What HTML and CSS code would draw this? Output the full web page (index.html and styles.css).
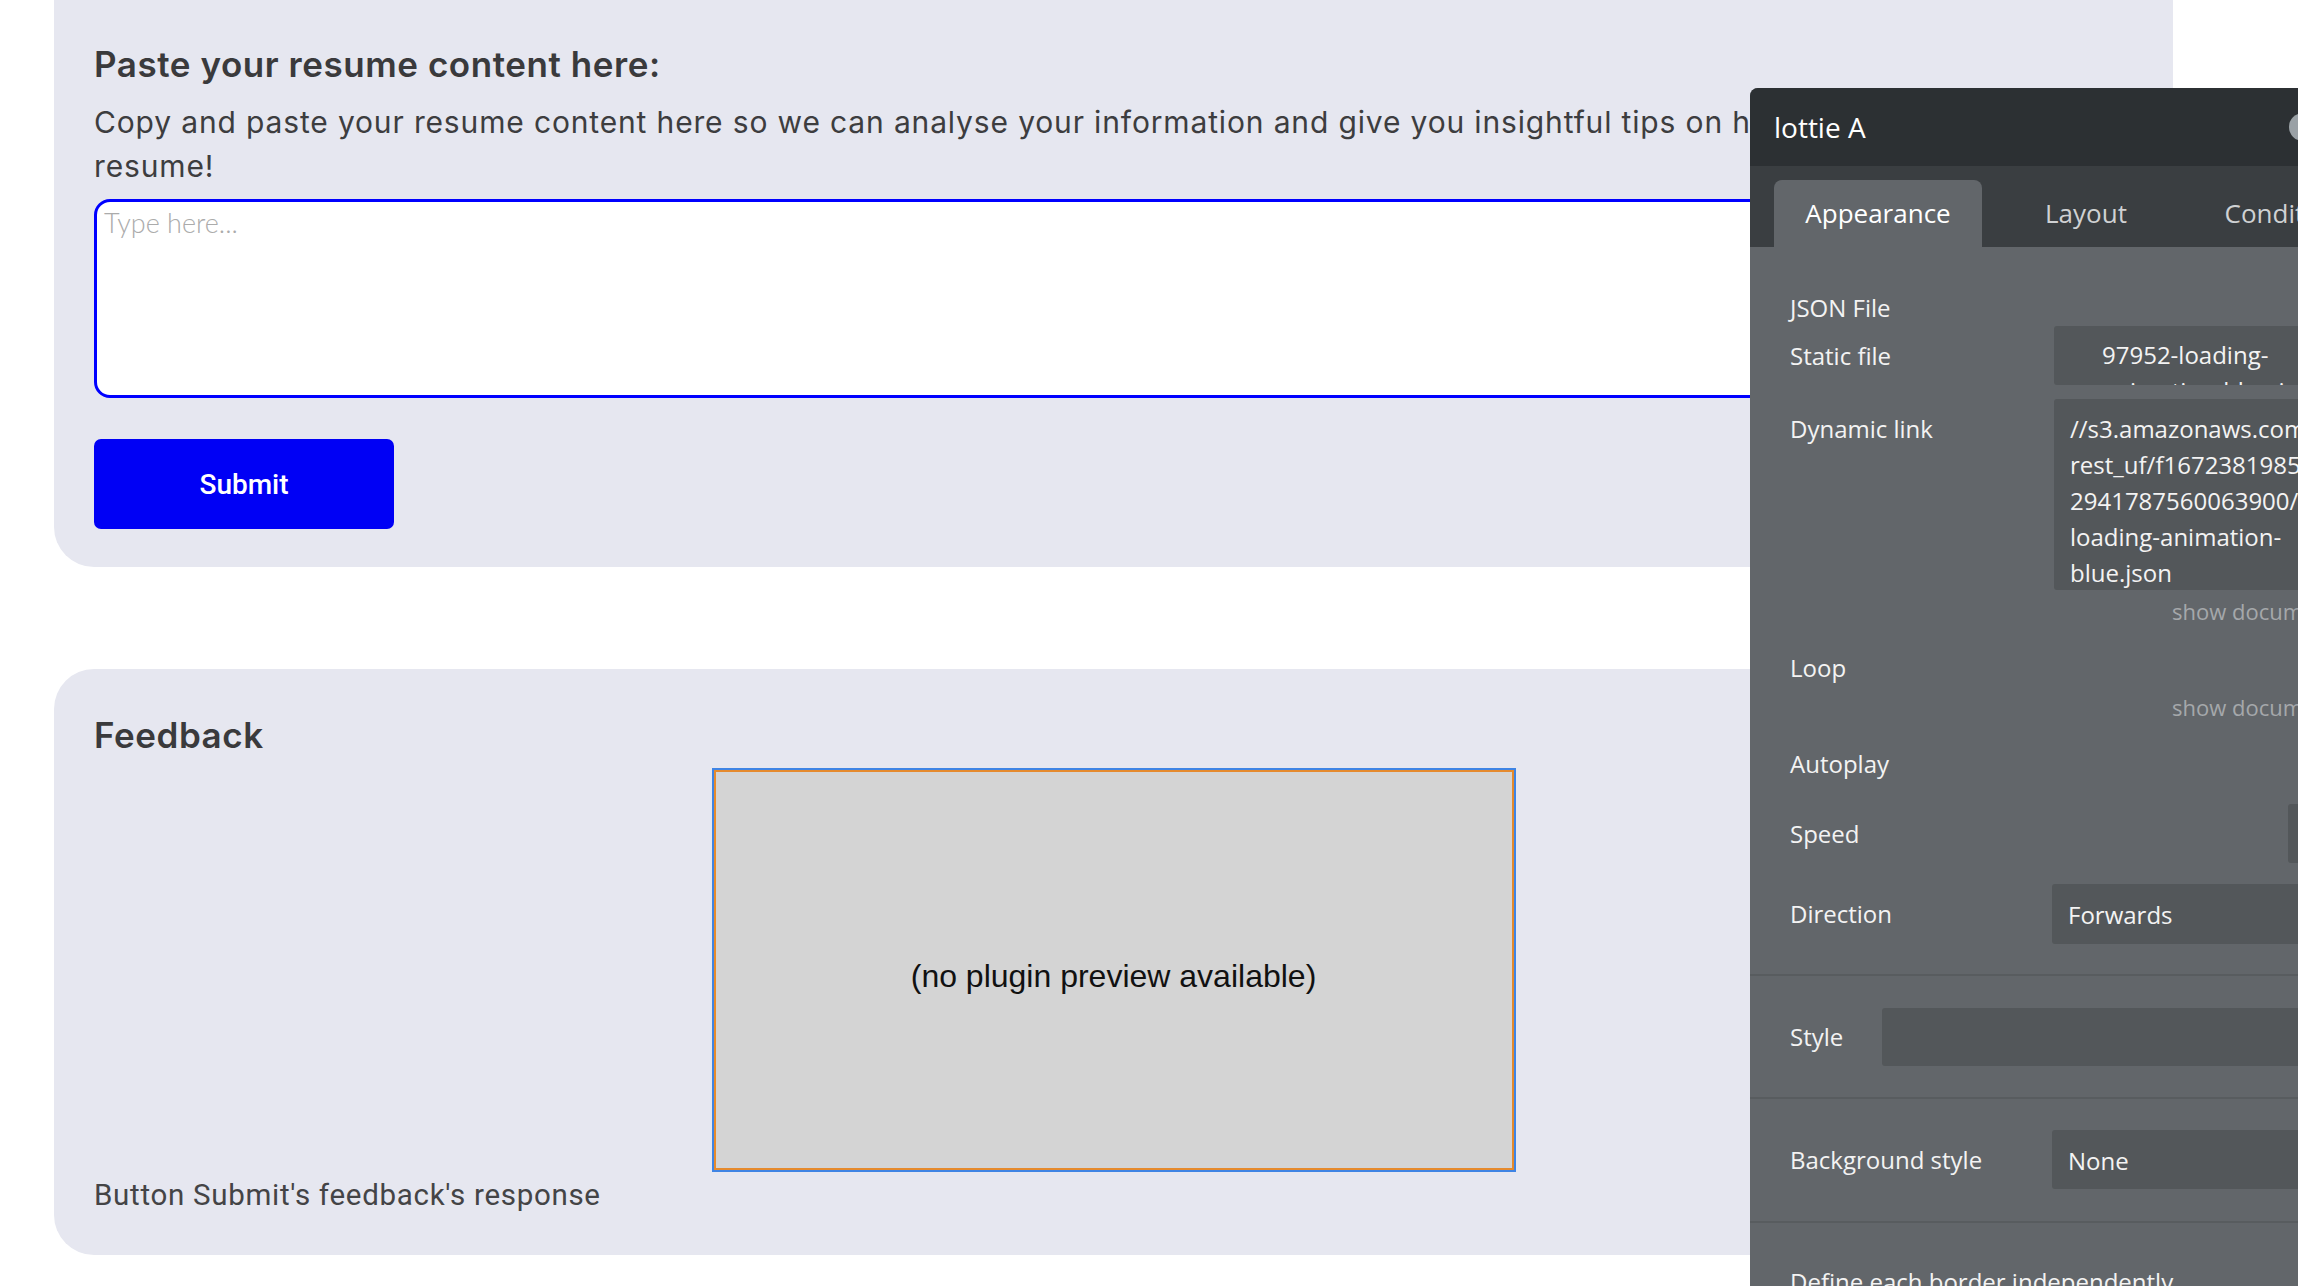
FILE: index.html
```html
<!DOCTYPE html>
<html lang="en">
<head>
  <meta charset="UTF-8">
  <meta name="viewport" content="width=device-width, initial-scale=1.0">
  <title>Resume Analyser - Editor Preview</title>
  <link rel="stylesheet" href="styles.css">
</head>
<body>
  <div class="page">
    <!-- Resume input -->
    <section class="card card-input">
      <h2>Paste your resume content here:</h2>
      <p class="intro">Copy and paste your resume content here so we can analyse your information and give you insightful tips on how to improve your resume!</p>
      <textarea class="resume-box" placeholder="Type here..."></textarea>
      <button class="submit-btn">Submit</button>
    </section>

    <!-- Feedback -->
    <section class="card card-feedback">
      <h2>Feedback</h2>
      <div class="plugin-preview">(no plugin preview available)</div>
      <p class="response">Button Submit's feedback's response</p>
    </section>
  </div>

  <!-- Property editor floating over the page -->
  <aside class="editor">
    <div class="editor-header">
      <span class="editor-title">lottie A</span>
      <span class="editor-close"></span>
    </div>

    <div class="editor-tabs">
      <div class="tab active">Appearance</div>
      <div class="tab">Layout</div>
      <div class="tab">Conditional</div>
    </div>

    <div class="editor-section first">
      <div class="prop-label heading">JSON File</div>
      <div class="prop-row">
        <div class="prop-label">Static file</div>
        <div class="prop-input static-file">97952-loading-<br>animation-blue.json</div>
      </div>
      <div class="prop-row top dynamic">
        <div class="prop-label">Dynamic link</div>
        <div class="prop-input dynamic-link">
          <div>//s3.amazonaws.com/appfo</div>
          <div>rest_uf/f1672381985339x</div>
          <div>2941787560063900/97952-</div>
          <div>loading-animation-</div>
          <div>blue.json</div>
        </div>
      </div>
      <div class="show-doc first-doc">show documentation</div>
      <div class="prop-label loop">Loop</div>
      <div class="show-doc second-doc">show documentation</div>
      <div class="prop-label autoplay">Autoplay</div>
      <div class="prop-row speed">
        <div class="prop-label">Speed</div>
        <div class="prop-input speed-input"></div>
      </div>
      <div class="prop-row direction">
        <div class="prop-label">Direction</div>
        <div class="prop-input select">Forwards</div>
      </div>
    </div>

    <div class="editor-section style-section">
      <div class="prop-row">
        <div class="prop-label short">Style</div>
        <div class="prop-input style-input"></div>
      </div>
    </div>

    <div class="editor-section bg-section">
      <div class="prop-row">
        <div class="prop-label">Background style</div>
        <div class="prop-input select">None</div>
      </div>
    </div>

    <div class="editor-section border-section">
      <div class="prop-label">Define each border independently</div>
    </div>
  </aside>
</body>
</html>
```

FILE: styles.css
```css
html, body {
  margin: 0;
  padding: 0;
  height: 100%;
}

body {
  background-color: #fff;
  font-family: Inter, Roboto, sans-serif;
  color: #3b3b3b;
  overflow: hidden;
  position: relative;
}

.page {
  padding-left: 54px;
}

.card {
  width: 2119px;
  box-sizing: border-box;
  background-color: #e6e7f0;
  padding: 0 40px;
}

.card h2 {
  margin: 0;
  font-family: Inter, Roboto, sans-serif;
  font-size: 35px;
  font-weight: 600;
  line-height: 42px;
  letter-spacing: 0.55px;
  color: #3a3a3c;
}

/* Resume input card */
.card-input {
  border-radius: 0 0 40px 40px;
  padding-top: 43px;
  padding-bottom: 38px;
}

.intro {
  margin: 15px 0 0;
  font-size: 30px;
  line-height: 44px;
  letter-spacing: 0.85px;
  color: #3d3d3f;
}

.resume-box {
  display: block;
  width: 100%;
  height: 199px;
  box-sizing: border-box;
  margin-top: 11px;
  padding: 4px 7px;
  border: 3px solid #0000ff;
  border-radius: 16px;
  background-color: #fff;
  font-family: Lato, sans-serif;
  font-size: 27px;
  resize: none;
  outline: none;
}

.resume-box::placeholder {
  color: #ababab;
  font-weight: 300;
}

.submit-btn {
  display: block;
  width: 300px;
  height: 90px;
  margin-top: 41px;
  border: none;
  border-radius: 7px;
  background-color: #0000f5;
  color: #fff;
  font-family: Roboto, sans-serif;
  font-size: 28px;
  font-weight: 500;
  cursor: pointer;
}

/* Feedback card */
.card-feedback {
  margin-top: 102px;
  border-radius: 40px;
  padding-top: 45px;
  padding-bottom: 42px;
}

.plugin-preview {
  width: 804px;
  height: 404px;
  box-sizing: border-box;
  margin: 12px auto 0;
  border: 2px solid #3f84e4;
  box-shadow: inset 0 0 0 2px #e58a2d;
  background-color: #d4d4d4;
  display: flex;
  align-items: center;
  justify-content: center;
  padding-top: 12px;
  font-family: "Liberation Sans", Arial, sans-serif;
  font-size: 32px;
  color: #111;
}

.response {
  margin: 5px 0 0;
  font-family: Roboto, sans-serif;
  font-size: 29.5px;
  line-height: 36px;
  letter-spacing: 0.7px;
  color: #444446;
}

/* Editor panel */
.editor {
  position: absolute;
  left: 1750px;
  top: 88px;
  width: 620px;
  height: 1260px;
  background-color: #62666a;
  border-top-left-radius: 8px;
  overflow: hidden;
  font-family: "Open Sans", sans-serif;
  color: #f3f3f3;
}

.editor-header {
  height: 78px;
  background-color: #2c3033;
  display: flex;
  align-items: center;
  padding: 0 53px 0 24px;
}

.editor-title {
  font-size: 28px;
  color: #fff;
}

.editor-close {
  margin-left: auto;
  width: 28px;
  height: 28px;
  border-radius: 50%;
  background-color: #9aa1a6;
}

.editor-tabs {
  height: 81px;
  background-color: #3a3e41;
  display: flex;
  align-items: flex-end;
  padding-left: 24px;
}

.tab {
  flex-shrink: 0;
  width: 208px;
  height: 67px;
  line-height: 67px;
  text-align: center;
  font-size: 26px;
  color: #cfd1d3;
  white-space: nowrap;
}

.tab.active {
  background-color: #62666a;
  color: #fff;
  border-radius: 8px 8px 0 0;
}

.editor-section {
  padding-left: 40px;
  border-bottom: 2px solid #585c5f;
}

.editor-section.first {
  padding-top: 44px;
  padding-bottom: 30px;
}

.prop-label {
  font-size: 24px;
  line-height: 34px;
  width: 264px;
  flex-shrink: 0;
}

.prop-label.short {
  width: 92px;
}

.prop-row {
  display: flex;
  align-items: center;
  margin-top: 1px;
}

.prop-row.top {
  align-items: flex-start;
}

.prop-row.top .prop-label {
  margin-top: 13px;
}

.prop-row.dynamic {
  margin-top: 14px;
}

.prop-input {
  flex: 1;
  background-color: #53575a;
  border-radius: 3px;
  font-size: 24px;
  line-height: 36px;
  overflow: hidden;
  box-sizing: border-box;
}

.static-file {
  height: 59px;
  padding: 11px 0 0 48px;
}

.dynamic-link {
  height: 191px;
  padding: 12px 0 0 16px;
  white-space: nowrap;
}

.show-doc {
  padding-left: 382px;
  font-size: 22px;
  line-height: 30px;
  color: #a5a8ab;
  white-space: nowrap;
}

.first-doc {
  margin-top: 6px;
}

.second-doc {
  margin-top: 7px;
}

.loop {
  margin-top: 25px;
}

.autoplay {
  margin-top: 25px;
}

.prop-row.speed {
  margin-top: 23px;
}

.speed-input {
  height: 59px;
  margin-left: 234px;
}

.prop-row.direction {
  margin-top: 21px;
}

.select {
  height: 60px;
  line-height: 62px;
  padding-left: 16px;
  margin-left: -2px;
}

.style-section {
  padding-top: 31px;
  padding-bottom: 31px;
}

.style-input {
  height: 58px;
}

.bg-section {
  padding-top: 30px;
  padding-bottom: 32px;
}

.bg-section .select {
  height: 59px;
  line-height: 61px;
}

.border-section {
  padding-top: 42px;
  border-bottom: none;
}

.border-section .prop-label {
  width: auto;
}
```
